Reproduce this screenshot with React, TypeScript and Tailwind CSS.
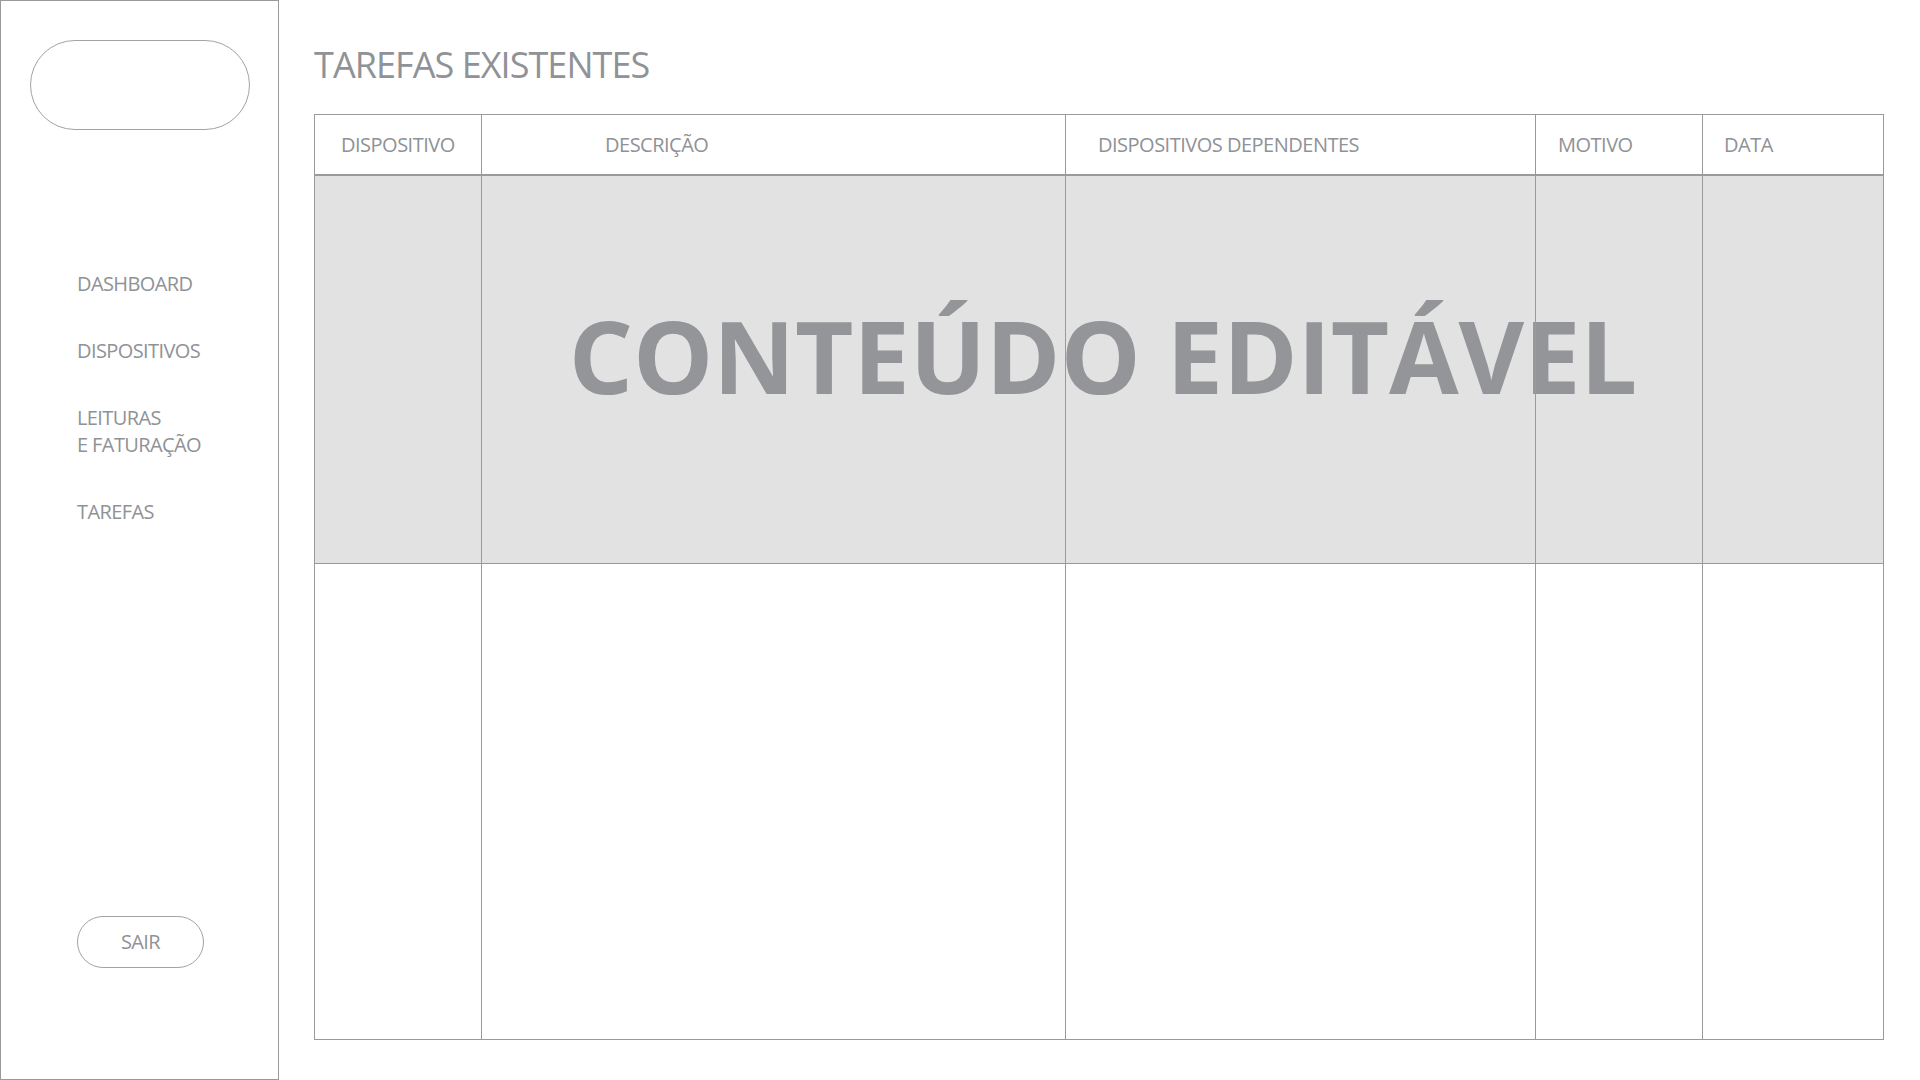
const columns = [
  { label: "DISPOSITIVO", pad: "pl-[26px]" },
  { label: "DESCRIÇÃO", pad: "pl-[123px]" },
  { label: "DISPOSITIVOS DEPENDENTES", pad: "pl-[32px]" },
  { label: "MOTIVO", pad: "pl-[22px]" },
  { label: "DATA", pad: "pl-[21px]" },
];

const navItems = [["DASHBOARD"], ["DISPOSITIVOS"], ["LEITURAS", "E FATURAÇÃO"], ["TAREFAS"]];

function Sidebar() {
  return (
    <aside className="w-[279px] h-[1080px] shrink-0 border border-[#9a9a9a] flex flex-col">
      {/* logo placeholder */}
      <div className="mt-[39px] ml-[29px] w-[220px] h-[90px] rounded-full border border-[#a3a3a3]"></div>

      <nav className="mt-[140px] pl-[76px] flex flex-col gap-10 text-[20px] leading-[27px] tracking-[-0.6px] text-[#8f9296]">
        {navItems.map((lines) => (
          <a key={lines[0]} className="cursor-pointer">
            {lines.map((l) => (
              <div key={l}>{l}</div>
            ))}
          </a>
        ))}
      </nav>

      <button className="mt-auto mb-[111px] ml-[76px] w-[127px] h-[52px] rounded-full border border-[#a3a3a3] text-[20px] tracking-[-0.6px] text-[#8f9296]">
        SAIR
      </button>
    </aside>
  );
}

function TaskTable() {
  return (
    <div className="border border-[#9a9a9a] flex flex-col h-[926px]">
      {/* Header */}
      <div className="grid grid-cols-[167px_584px_470px_167px_1fr] h-[61px] border-b-2 border-[#9a9a9a]">
        {columns.map((c, i) => (
          <div
            key={c.label}
            className={`flex items-center ${c.pad} text-[20px] tracking-[-0.5px] text-[#8f9296] ${i < 4 ? "border-r border-[#9a9a9a]" : ""}`}
          >
            {c.label}
          </div>
        ))}
      </div>

      {/* Editable row */}
      <div className="relative h-[388px] bg-[#e2e2e2] border-b border-[#9a9a9a]">
        <div className="absolute inset-0 flex items-center justify-center pb-[29px] pl-[8px]">
          <span className="text-[101px] leading-none font-bold tracking-[-0.2px] text-[#939598]">CONTEÚDO EDITÁVEL</span>
        </div>
        <div className="relative z-10 grid grid-cols-[167px_584px_470px_167px_1fr] h-full">
          {columns.map((c, i) => (
            <div key={c.label} className={i < 4 ? "border-r border-[#9a9a9a]" : ""}></div>
          ))}
        </div>
      </div>

      {/* Empty row */}
      <div className="flex-1 grid grid-cols-[167px_584px_470px_167px_1fr]">
        {columns.map((c, i) => (
          <div key={c.label} className={i < 4 ? "border-r border-[#9a9a9a]" : ""}></div>
        ))}
      </div>
    </div>
  );
}

export default function App() {
  return (
    <div className="w-[1920px] h-[1080px] flex bg-white font-['Open_Sans',sans-serif] overflow-hidden">
      <Sidebar />
      <main className="flex-1 pl-[35px] pr-[36px]">
        <h1 className="mt-[41px] text-[36px] leading-[48px] tracking-[-0.95px] text-[#8f9296]">TAREFAS EXISTENTES</h1>
        <div className="mt-[25px]">
          <TaskTable />
        </div>
      </main>
    </div>
  );
}
